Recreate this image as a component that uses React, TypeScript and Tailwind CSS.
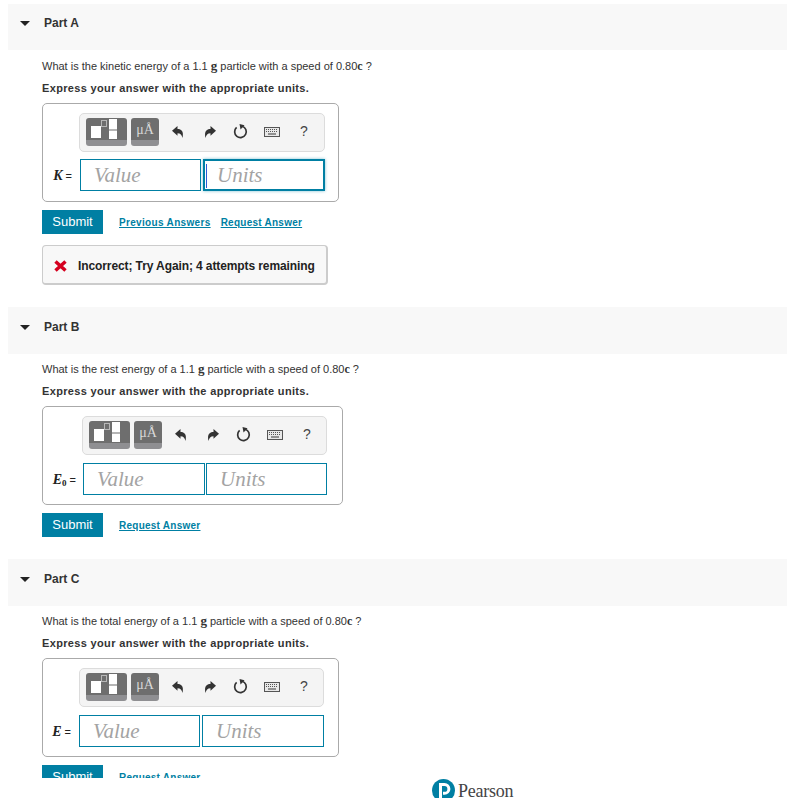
import type { ReactNode } from 'react';

const sans = "font-['Liberation_Sans',Arial,sans-serif]";
const serif = "font-['Liberation_Serif','Times_New_Roman',serif]";

function Templates() {
    return (
        <div className="w-[41px] h-[28px] rounded-[3px] bg-[#6e6e6e] border-b-[6px] border-[#8f8f92] relative overflow-hidden shrink-0">
            <div className="absolute left-[5px] top-[8px] w-[10px] h-[12px] bg-white" />
            <div className="absolute left-[15px] top-[2px] w-[6px] h-[7px] border border-[#b8b8b8]" />
            <div className="absolute left-[23px] top-[1px] w-[8px] h-[10px] bg-white" />
            <div className="absolute left-[23px] top-[11px] w-[8px] h-[2px] bg-[#b5b5b5]" />
            <div className="absolute left-[23px] top-[13px] w-[8px] h-[8px] bg-white" />
        </div>
    );
}

function Symbols() {
    return (
        <div className={`w-[28px] h-[28px] rounded-[3px] bg-[#6e6e6e] border-b-[6px] border-[#8f8f92] flex items-start justify-center shrink-0 text-[#d8d8d8] text-[14px] leading-[23px] ${serif}`}>
            μÅ
        </div>
    );
}

function Keyboard() {
    return (
        <svg width="16" height="10" viewBox="0 0 16 10" className="shrink-0">
            <rect x="0.5" y="0.5" width="15" height="9" fill="#e8e8e8" stroke="#555" />
            <path d="M2 2.5h12M2 4.5h12" stroke="#555" strokeDasharray="1 1" />
            <path d="M4 7h8" stroke="#555" strokeWidth="1.2" />
        </svg>
    );
}

function Reset() {
    return (
        <svg width="15" height="15" viewBox="0 0 15 15" className="shrink-0">
            <path d="M3.6 3.4a5.8 5.8 0 1 0 5.6-1.2" fill="none" stroke="#333" strokeWidth="1.7" />
            <path d="M6.5 0l5 1.2-4 4.4z" fill="#333" />
        </svg>
    );
}

// undo arrow, flipped for redo
function ArrowIcon({ flip }: { flip?: boolean }) {
    return (
        <svg width="12" height="12" viewBox="0 0 12 12" className={`shrink-0 ${flip ? '-scale-x-100' : ''}`}>
            <path d="M0 4.8L5.5 0v3C9.5 3 12 5.5 10.5 12 9.8 8.8 8.5 7.2 5.5 7.2v2.6z" fill="#333" />
        </svg>
    );
}

function Toolbar({ width }: { width: number }) {
    return (
        <div className="h-[39px] rounded-[5px] border border-[#dcdcdc] bg-[#f4f4f4] flex items-center pl-[6px] pb-[2px] ml-auto" style={{ width }}>
            <Templates />
            <div className="w-[4px]" />
            <Symbols />
            <div className="w-[13px]" />
            <ArrowIcon />
            <div className="w-[20px]" />
            <ArrowIcon flip />
            <div className="w-[17px]" />
            <Reset />
            <div className="w-[16px]" />
            <Keyboard />
            <div className="w-[20px]" />
            <span className={`text-[14px] text-[#444] ${sans}`}>?</span>
        </div>
    );
}

function Field({ label, width, focused }: { label: string; width: number; focused?: boolean }) {
    return (
        <div
            className={`h-[32px] bg-white border border-[#007fa3] flex items-center relative shrink-0 pt-px ${focused ? 'border-2 pl-[12px] shadow-[0_0_3px_#7fbfd1]' : 'pl-[13px]'}`}
            style={{ width }}
        >
            {focused && <div className="absolute left-[1px] top-[3px] h-[24px] w-px bg-[#2a5bd7]" />}
            <span className={`text-[21px] italic text-[#a3a3a3] ${serif}`}>{label}</span>
        </div>
    );
}

type BoxProps = {
    symbol: string;
    sub?: string;
    boxWidth: number;
    right: number;
    barWidth: number;
    valueWidth: number;
    unitsWidth: number;
    gap: number;
    rowTop: number;
    focused?: boolean;
};

function AnswerBox({ symbol, sub, boxWidth, right, barWidth, valueWidth, unitsWidth, gap, rowTop, focused }: BoxProps) {
    return (
        <div className="mt-[7px] h-[99px] rounded-[5px] border border-[#aaaaaa] pt-[9px] flex flex-col" style={{ width: boxWidth, paddingRight: right }}>
            <Toolbar width={barWidth} />
            <div className="flex items-center justify-end" style={{ gap, marginTop: rowTop }}>
                <span className={`mr-[6px] text-[14px] text-[#222] ${serif}`}>
                    <b><i>{symbol}</i>{sub && <sub className="text-[9px]">{sub}</sub>}</b>
                    <span className={`text-[11px] ${sans}`}> =</span>
                </span>
                <Field label="Value" width={valueWidth} />
                <Field label="Units" width={unitsWidth} focused={focused} />
            </div>
        </div>
    );
}

function Part({ title, kind, tall, children }: { title: string; kind: string; tall?: boolean; children: ReactNode }) {
    return (
        <section>
            <div className={`bg-[#f8f8f8] flex items-start ${tall ? 'h-[47px] pt-[13px]' : 'h-[46px] pt-[12px]'}`}>
                <svg width="10" height="5" viewBox="0 0 10 5" className="ml-[12px] mt-[5px] shrink-0">
                    <path d="M0 0h10L5 5z" fill="#222" />
                </svg>
                <h2 className="ml-[14px] text-[12px] leading-[15px] font-bold text-[#333]">{title}</h2>
            </div>
            <div className="pl-[34px]">
                <p className={`${tall ? 'mt-[7px]' : 'mt-[8px]'} h-[16px] text-[11px] leading-[16px] text-[#333]`}>
                    What is the {kind} energy of a 1.1 <span className={`text-[13px] font-bold ${serif}`}>g</span> particle with a speed of 0.80<b className={`text-[12px] ${serif}`}>c</b> ?
                </p>
                <p className="mt-[6px] h-[16px] text-[11px] leading-[16px] font-bold text-[#333] tracking-[0.34px]">
                    Express your answer with the appropriate units.
                </p>
                {children}
            </div>
        </section>
    );
}

function Actions({ previous }: { previous?: boolean }) {
    return (
        <div className="mt-[8px] flex items-center h-[24px]">
            <button className="w-[61px] h-[24px] bg-[#007fa3] text-white text-[13px]">Submit</button>
            {previous && <a className="ml-[16px] text-[10px] font-bold underline text-[#007fa3] tracking-[0.33px]">Previous Answers</a>}
            <a className={`${previous ? 'ml-[10px]' : 'ml-[16px]'} text-[10px] font-bold underline text-[#007fa3] tracking-[0.25px]`}>Request Answer</a>
        </div>
    );
}

export default function App() {
    return (
        <div className={`w-[787px] h-[798px] overflow-hidden bg-white ${sans}`}>
            <main className="h-[778px] overflow-hidden pl-2 pt-1">
                <Part title="Part A" kind="kinetic">
                    <AnswerBox symbol="K" boxWidth={297} right={13} barWidth={246} valueWidth={121} unitsWidth={122} gap={2} rowTop={7} focused />
                    <Actions previous />
                    <div className="mt-[11px] w-[286px] h-[40px] rounded-[4px] border border-[#cccccc] border-r-2 border-b-2 bg-[#f8f8f8] flex items-center pl-[11px] pt-[2px]">
                        <svg width="13" height="12" viewBox="0 0 13 12" className="shrink-0">
                            <path d="M1.5 1.5l10 9M11.5 1.5l-10 9" stroke="#d5001f" strokeWidth="3.5" />
                        </svg>
                        <span className="ml-[11px] text-[12px] font-bold text-[#222] whitespace-nowrap tracking-[-0.1px]">Incorrect; Try Again; 4 attempts remaining</span>
                    </div>
                </Part>
                <div className="mt-[22px]">
                    <Part title="Part B" kind="rest" tall>
                        <AnswerBox symbol="E" sub="0" boxWidth={301} right={15} barWidth={245} valueWidth={122} unitsWidth={121} gap={1} rowTop={8} />
                        <Actions />
                    </Part>
                </div>
                <div className="mt-[22px]">
                    <Part title="Part C" kind="total" tall>
                        <AnswerBox symbol="E" boxWidth={297} right={14} barWidth={245} valueWidth={121} unitsWidth={122} gap={2} rowTop={8} />
                        <Actions />
                    </Part>
                </div>
            </main>
            <footer className="h-[20px] overflow-hidden pl-[432px] flex items-start">
                <svg width="23" height="23" viewBox="0 0 23 23" className="shrink-0 mt-px">
                    <circle cx="11.5" cy="11.5" r="11.5" fill="#007fa3" />
                    <path d="M8.5 21V5.5h4a4.3 4.3 0 0 1 0 8.8h-1.5" fill="none" stroke="#fff" strokeWidth="3" />
                </svg>
                <span className={`ml-[3px] text-[18px] leading-[26px] text-[#444] tracking-[-0.25px] ${serif}`}>Pearson</span>
            </footer>
        </div>
    );
}
